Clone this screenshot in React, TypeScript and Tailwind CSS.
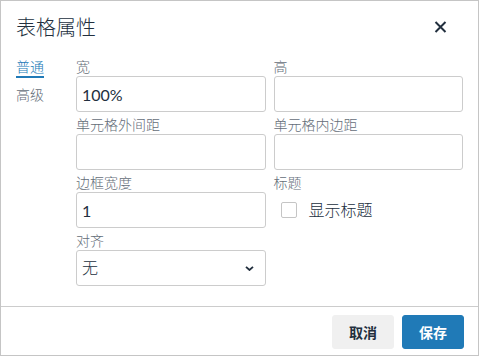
import { type ReactNode } from 'react';

function Field({ label, children }: { label: string; children: ReactNode }) {
  return (
    <div className="flex flex-col">
      <label className="text-[14px] font-light leading-[18px] text-[#646d78]">{label}</label>
      {children}
    </div>
  );
}

function TextInput({ value = '' }: { value?: string }) {
  return (
    <input
      readOnly
      value={value}
      className="h-[36px] w-full rounded-[3px] border border-[#cccccc] bg-white px-[5px] text-[16px] text-[#222f3e] outline-none"
    />
  );
}

export default function App() {
  return (
    <div
      className="flex h-[356px] w-[479px] flex-col border border-[#c5c5c5] bg-white text-[#222f3e]"
      style={{ fontFamily: 'Lato, "Noto Sans CJK SC", sans-serif' }}
    >
      {/* Header */}
      <div className="flex h-[51px] items-center justify-between px-[15px]">
        <h2 className="text-[20px] font-light leading-[24px] text-[#222f3e]">表格属性</h2>
        <button className="mr-[11px] flex h-[24px] w-[24px] items-center justify-center">
          <svg width="13" height="12" viewBox="0 0 13 12" fill="none">
            <path d="M1.5 1 L11.5 11 M11.5 1 L1.5 11" stroke="#222f3e" strokeWidth="2" />
          </svg>
        </button>
      </div>

      {/* Body */}
      <div className="flex flex-1 px-[15px] pt-[6px]">
        {/* Tabs */}
        <div className="flex w-[60px] shrink-0 flex-col items-start gap-[8px]">
          <div className="border-b-2 border-[#207ab7] text-[14px] font-light leading-[18px] text-[#207ab7]">普通</div>
          <div className="text-[14px] font-light leading-[18px] text-[#646d78]">高级</div>
        </div>

        {/* Form */}
        <div className="grid w-[388px] grid-cols-2 content-start gap-x-[8px] gap-y-[4px]">
          <Field label="宽">
            <TextInput value="100%" />
          </Field>
          <Field label="高">
            <TextInput />
          </Field>
          <Field label="单元格外间距">
            <TextInput />
          </Field>
          <Field label="单元格内边距">
            <TextInput />
          </Field>
          <Field label="边框宽度">
            <TextInput value="1" />
          </Field>
          <Field label="标题">
            <div className="flex h-[36px] items-center pl-[7px]">
              <span className="h-[16px] w-[16px] rounded-[2px] border border-[#c5c5c5] bg-white" />
              <span className="ml-[12px] text-[16px] font-light text-[#222f3e]">显示标题</span>
            </div>
          </Field>
          <Field label="对齐">
            <div className="flex h-[36px] items-center justify-between rounded-[3px] border border-[#cccccc] bg-white pl-[5px] pr-[11px]">
              <span className="text-[16px] font-light text-[#222f3e]">无</span>
              <svg width="9" height="5" viewBox="0 0 9 5" fill="none">
                <path d="M1 0.8 L4.5 4 L8 0.8" stroke="#222f3e" strokeWidth="1.8" />
              </svg>
            </div>
          </Field>
        </div>
      </div>

      {/* Footer */}
      <div className="flex h-[49px] justify-end gap-[8px] border-t border-[#cccccc] px-[14px] pt-[8px]">
        <button className="h-[34px] rounded-[3px] border border-[#f0f0f0] bg-[#f0f0f0] px-[16px] text-[14px] font-bold text-[#222f3e]">
          取消
        </button>
        <button className="h-[34px] rounded-[3px] border border-[#207ab7] bg-[#207ab7] px-[16px] text-[14px] font-bold text-white">
          保存
        </button>
      </div>
    </div>
  );
}
